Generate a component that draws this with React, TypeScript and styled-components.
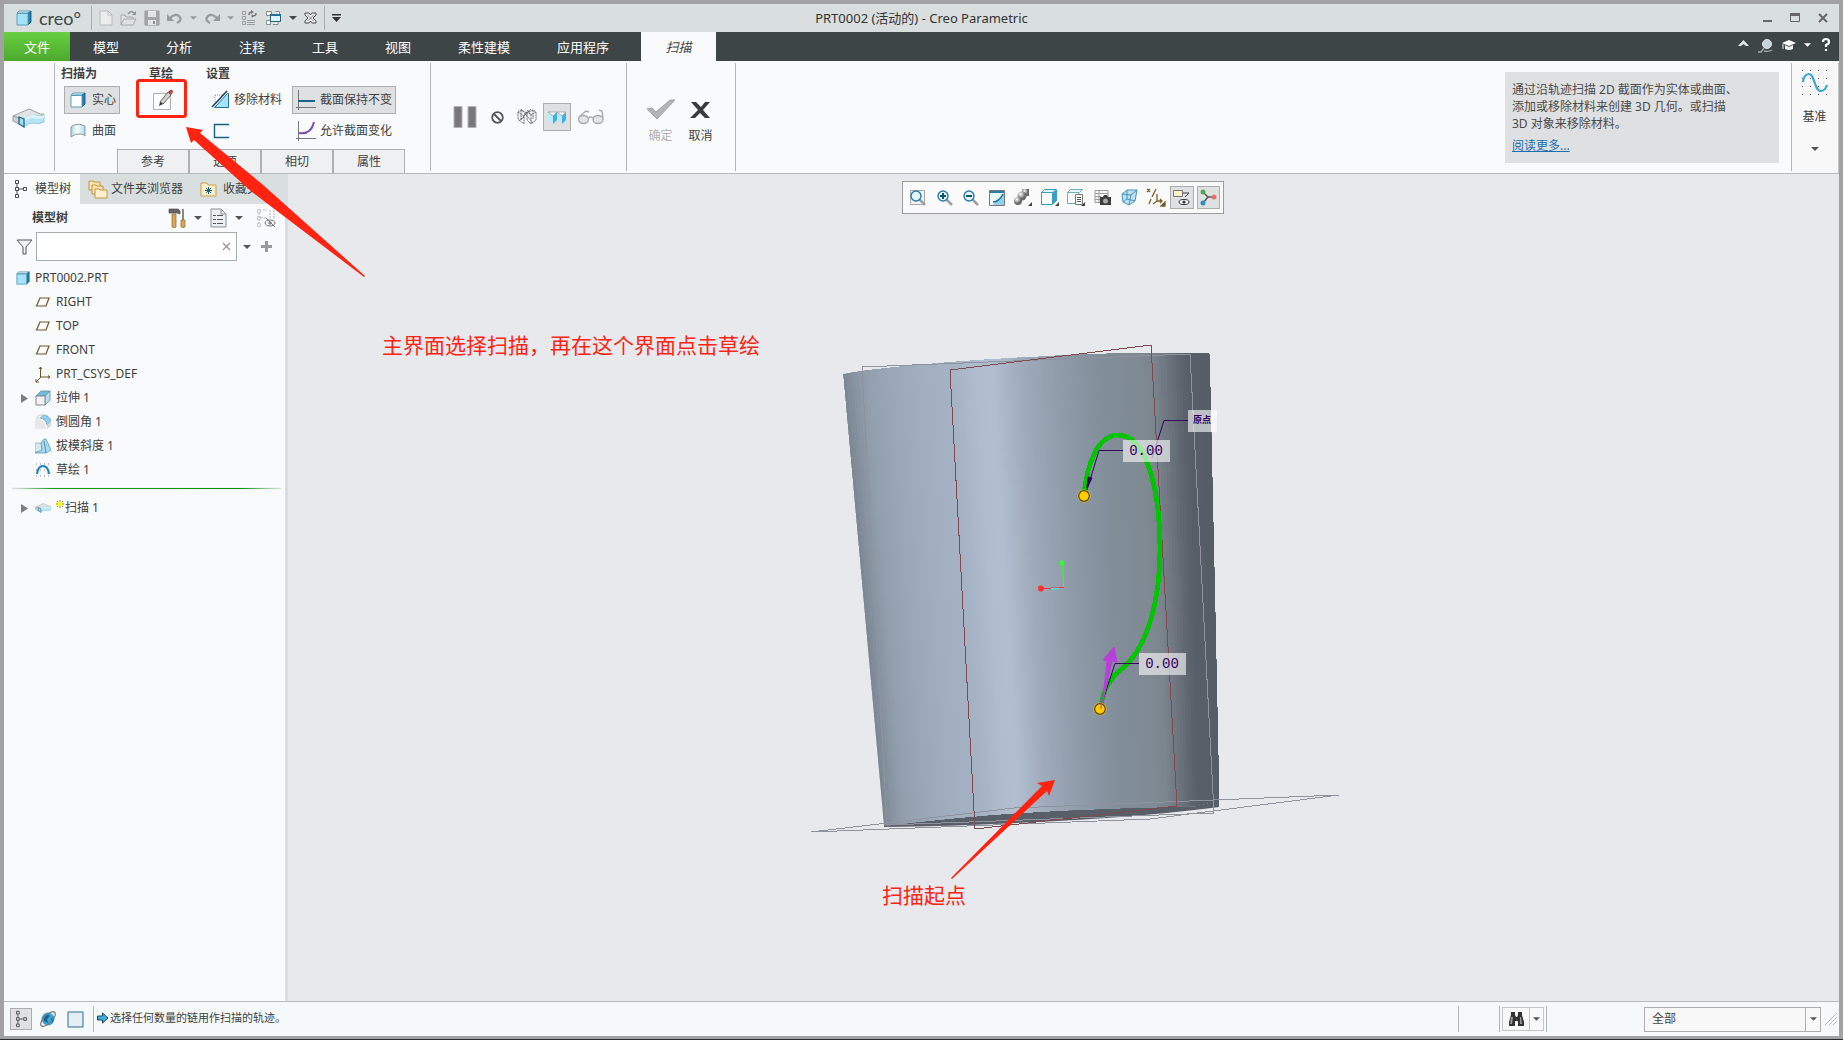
import React from "react";
import styled, { createGlobalStyle, css } from "styled-components";

const Global = createGlobalStyle`
  * { box-sizing: border-box; }
  html, body, #root { height: 100%; margin: 0; }
  body {
    font: 12px/18px "Noto Sans", "Noto Sans CJK SC", sans-serif;
    color: #3f3f3f;
    overflow: hidden;
  }
  button, input, select { font: inherit; color: inherit; }
  button { border: 0; background: none; padding: 0; }
  svg { display: block; flex: none; }
  ul { list-style: none; margin: 0; padding: 0; }
`;

/* ---------- frame ---------- */

const Window = styled.div`
  position: relative;
  display: flex;
  flex-direction: column;
  min-height: 100vh;
  background: #f8fafc;
  border: 4px solid #a2a2a2;
  &::after {
    content: "";
    position: absolute;
    left: -4px;
    right: -4px;
    bottom: -4px;
    height: 1px;
    background: #2b2b2b;
  }
`;

const TitleBar = styled.header`
  display: grid;
  grid-template-columns: 1fr auto 1fr;
  align-items: center;
  height: 28px;
  background: #d9dfde;
`;

const QuickBar = styled.div`
  display: flex;
  align-items: center;
  gap: 7px;
  padding-left: 12px;
`;

const Brand = styled.span`
  font: 18px/24px "Lato", sans-serif;
  color: #3d4446;
  width: 45px;
`;

const IconButton = styled.button`
  display: flex;
  align-items: center;
  justify-content: center;
`;

const TitleRule = styled.span`
  width: 1px;
  height: 24px;
  background: #a9afae;
`;

const Title = styled.h1`
  margin: 0;
  font-size: 13px;
  font-weight: 400;
  color: #333;
`;

const WindowButtons = styled.div`
  display: flex;
  justify-content: flex-end;
  gap: 17px;
  padding-right: 11px;
`;

/* ---------- menu ---------- */

const MenuBar = styled.nav`
  display: flex;
  align-items: stretch;
  height: 29px;
  background: #3d4547;
  font-size: 13px;
`;

const FileTab = styled.button`
  width: 66px;
  color: #fff;
  background: linear-gradient(#67cf3f, #4ea92e);
`;

const MenuItems = styled.div`
  display: flex;
  gap: 47px;
  padding: 0 32px 0 23px;
`;

const MenuItem = styled.button`
  color: #fff;
`;

const ActiveTab = styled.button`
  width: 75px;
  background: #f8fafc;
  font-style: italic;
`;

const MenuTools = styled.div`
  display: flex;
  align-items: center;
  gap: 8px;
  margin-left: auto;
  padding: 0 6px 3px 0;
`;

/* ---------- ribbon ---------- */

const Ribbon = styled.section`
  display: flex;
  height: 113px;
  padding-top: 2px;
  background: #f8fafc;
  border-bottom: 1px solid #b4bab9;
`;

const FeatureIcon = styled.div`
  display: flex;
  align-items: center;
  width: 50px;
  padding-left: 8px;
`;

const Rule = styled.span`
  flex: none;
  width: 1px;
  height: 108px;
  background: #b2b6b8;
`;

const Options = styled.div`
  display: flex;
  flex-direction: column;
  width: 375px;
`;

const OptionGroups = styled.div`
  display: flex;
  height: 86px;
`;

const Group = styled.div<{ $left: number; $width: number }>`
  padding-left: ${(p) => p.$left}px;
  width: ${(p) => p.$width}px;
`;

const GroupTitle = styled.h2`
  margin: 2px 0 3px;
  font-size: 12px;
  line-height: 18px;
  font-weight: 600;
`;

const OptionGrid = styled.div`
  display: grid;
  grid-template-columns: 86px 104px;
  row-gap: 3px;
`;

const pressed = css`
  background: #dfe0e2;
  border-color: #adadb0;
`;

const Option = styled.button<{ $on?: boolean; $gap?: number; $pad?: number }>`
  display: flex;
  align-items: center;
  gap: ${(p) => p.$gap ?? 6}px;
  height: 28px;
  padding: 0 3px 0 ${(p) => p.$pad ?? 4}px;
  white-space: nowrap;
  border: 1px solid transparent;
  ${(p) => p.$on && pressed}
`;

const Stack = styled.div`
  display: flex;
  flex-direction: column;
  gap: 3px;
  width: 56px;
  margin-left: 3px;
`;

const SketchButton = styled.button`
  display: flex;
  align-items: center;
  justify-content: center;
  width: 24px;
  height: 28px;
  margin-left: 2px;
`;

const PanelTabs = styled.div`
  display: flex;
  padding-left: 62px;
`;

const PanelTab = styled.button`
  width: 72px;
  height: 24px;
  background: #eef0f2;
  border: 1px solid #adb0b3;
  border-bottom: 0;
`;

const Preview = styled.div`
  display: flex;
  align-items: center;
  gap: 10px;
  width: 195px;
  height: 108px;
  padding-left: 22px;
`;

const SmallToggle = styled.button<{ $on?: boolean }>`
  display: flex;
  align-items: center;
  justify-content: center;
  width: 28px;
  height: 28px;
  margin: 0 -4px;
  border: 1px solid transparent;
  ${(p) => p.$on && pressed}
`;

const Confirm = styled.div`
  display: flex;
  align-items: center;
  gap: 11px;
  width: 108px;
  height: 108px;
  padding: 9px 0 0 19px;
`;

const ConfirmButton = styled.button`
  display: flex;
  flex-direction: column;
  align-items: center;
  gap: 7px;
  width: 29px;
  white-space: nowrap;
  &:disabled { color: #b0b0b0; }
`;

const Help = styled.aside`
  width: 274px;
  height: 91px;
  margin: 9px 12px 0 auto;
  padding: 9px 7px;
  background: #dfe0e2;
  line-height: 17px;
  color: #4a4a4a;
  p { margin: 0 0 5px; }
`;

const HelpLink = styled.a`
  color: #1b6fae;
`;

const Datum = styled.button`
  display: flex;
  flex-direction: column;
  align-items: center;
  width: 47px;
  height: 110px;
  padding: 6px 1px 0 0;
  background: #f8f8f8;
  border-right: 1px solid #c4c4c4;
  svg + span { margin: 11px 0 21px; }
`;

/* ---------- workspace ---------- */

const Workspace = styled.div`
  display: flex;
  flex: 1;
`;

const Side = styled.aside`
  display: flex;
  flex-direction: column;
  width: 284px;
  background: #f8fafc;
  border-right: 3px solid #d9dfde;
`;

const SideTabs = styled.div`
  display: flex;
  height: 30px;
  margin-right: -3px;
  background: #d9dfde;
`;

const SideTab = styled.button<{ $on?: boolean; $width: number; $gap: number }>`
  display: flex;
  align-items: center;
  gap: ${(p) => p.$gap}px;
  width: ${(p) => p.$width}px;
  padding-left: ${(p) => (p.$on ? 10 : 8)}px;
  white-space: nowrap;
  background: ${(p) => (p.$on ? "#f8fafc" : "none")};
`;

const TreeHead = styled.div`
  display: flex;
  align-items: center;
  height: 28px;
  gap: 8px;
  padding: 0 9px 0 28px;
  strong { font-weight: 600; margin-right: auto; }
  button:last-child { margin-left: 5px; }
`;

const Search = styled.label`
  display: flex;
  align-items: center;
  height: 29px;
  gap: 6px;
  padding-left: 12px;
`;

const SearchBox = styled.span`
  display: flex;
  align-items: center;
  width: 201px;
  height: 29px;
  margin-left: -3px;
  padding-right: 4px;
  background: #fff;
  border: 1px solid #a4b0ae;
  input {
    flex: 1;
    min-width: 0;
    height: 26px;
    border: 0;
    outline: 0;
    background: none;
  }
`;

const Tree = styled.ul`
  margin-top: 5px;
`;

const TreeRow = styled.li<{ $level: number }>`
  display: flex;
  align-items: center;
  height: 24px;
  gap: 5px;
  padding-left: ${(p) => (p.$level ? 16 : 12)}px;
`;

const TreeLabel = styled.span`
  display: flex;
  gap: 1px;
`;

const Expander = styled.span`
  width: 10px;
`;

const InsertLine = styled.li`
  height: 14px;
  margin: 0 4px 0 8px;
  padding-top: 6px;
  &::before {
    content: "";
    display: block;
    height: 1px;
    background: linear-gradient(90deg, #dbe8db, #1c9c1c 15%, #0f8f0f 85%, #dbe8db);
    box-shadow: 0 0 1px #9c9;
  }
`;

const View = styled.main`
  position: relative;
  flex: 1;
  min-height: 827px;
  background: #e8e9ed;
  overflow: hidden;
`;

const ViewTools = styled.div`
  position: relative;
  display: flex;
  align-items: center;
  gap: 3px;
  width: 322px;
  height: 33px;
  margin: 7px 0 0 614px;
  padding: 0 3px;
  background: #fafafb;
  border: 1px solid #9c9c9c;
`;

const ViewTool = styled.button<{ $on?: boolean }>`
  display: flex;
  align-items: center;
  justify-content: center;
  flex: 1;
  height: 23px;
  border: 1px solid transparent;
  ${(p) => p.$on && pressed}
`;

const Scene = styled.svg`
  position: absolute;
  left: 0;
  top: 0;
`;

const Tag = styled.span<{ $x: number; $y: number; $w: number; $small?: boolean }>`
  position: absolute;
  left: ${(p) => p.$x}px;
  top: ${(p) => p.$y}px;
  width: ${(p) => p.$w}px;
  height: 22px;
  padding-right: 1px;
  text-align: center;
  color: #35005e;
  background: rgba(255, 255, 255, 0.6);
  font: ${(p) => (p.$small ? "bold 9px" : "14px")}/22px "Liberation Mono", "Noto Sans CJK SC", monospace;
`;

const Markup = styled.svg`
  position: absolute;
  left: -4px;
  top: -4px;
  pointer-events: none;
`;

const Note = styled.p<{ $x: number; $y: number }>`
  position: absolute;
  left: ${(p) => p.$x}px;
  top: ${(p) => p.$y}px;
  margin: 0;
  font-size: 21px;
  line-height: 28px;
  color: #ff2312;
  white-space: nowrap;
`;

/* ---------- status bar ---------- */

const Status = styled.footer`
  display: flex;
  align-items: center;
  height: 35px;
  padding: 0 2px 0 6px;
  background: #f6f9fa;
  border-top: 1px solid #b4bfbd;
`;

const StatusButton = styled.button<{ $on?: boolean }>`
  display: flex;
  align-items: center;
  justify-content: center;
  width: 22px;
  height: 22px;
  margin-right: 5px;
  border: 1px solid transparent;
  ${(p) => p.$on && pressed}
`;

const StatusRule = styled.span<{ $after: number; $before?: number }>`
  width: 1px;
  height: 26px;
  margin: 0 ${(p) => p.$after}px 0 ${(p) => p.$before ?? 0}px;
  background: #b2b6b8;
`;

const Message = styled.span`
  display: flex;
  align-items: center;
  gap: 1px;
  margin-right: auto;
  padding-bottom: 2px;
  font-size: 11px;
`;

const Find = styled.div`
  display: flex;
  width: 42px;
  height: 24px;
  margin-right: 2px;
  border: 1px solid #c4c6c8;
  background: #f8f8f8;
  button + button { border-left: 1px solid #c4c6c8; width: 14px; }
  button:first-child { flex: 1; }
`;

const SelectBox = styled.div`
  display: flex;
  position: relative;
  width: 177px;
  height: 25px;
  margin-right: 4px;
  background: #f8f8f8;
  border: 1px solid #adadb0;
  select {
    flex: 1;
    appearance: none;
    border: 0;
    background: none;
    padding: 0 7px;
    outline: 0;
  }
`;

const SelectArrow = styled.span`
  display: flex;
  align-items: center;
  justify-content: center;
  width: 15px;
  border-left: 1px solid #adadb0;
  pointer-events: none;
`;

/* ---------- icons ---------- */

const Caret = ({ c = "#555", w = 8 }: { c?: string; w?: number }) => (
  <svg width={w} height="4" viewBox="0 0 8 4"><path d="M0 0h8L4 4z" fill={c} /></svg>
);

const Cube = ({ s = 16, face = "#a5e3fb" }: { s?: number; face?: string }) => (
  <svg width={s} height={s} viewBox="0 0 16 16">
    <path d="M1 3l2-2h12l-3 2z" fill="#dff5fe" stroke="#5b9cb8" />
    <path d="M12 3.500L15 1v11l-3 3z" fill="#1f7fae" stroke="#1a6a94" />
    <path d="M1 3.500h11V15H1z" fill={face} stroke="#5b9cb8" />
  </svg>
);

const NewIcon = () => (
  <svg width="14" height="16" viewBox="0 0 14 16"><path d="M1 1h8l4 4v10H1z" fill="#eceeee" stroke="#b9bcbc" /><path d="M9 1v4h4" fill="none" stroke="#b9bcbc" /></svg>
);
const OpenIcon = () => (
  <svg width="17" height="16" viewBox="0 0 17 16"><path d="M1 15V5h4l1 2h7v2M1 15l3-6h12l-3 6z" fill="#dfe1e1" stroke="#a7aaaa" /><path d="M8 4q3-4 6-1" fill="none" stroke="#8f9292" strokeWidth="1.600" /><path d="M16 1v4h-4z" fill="#8f9292" /></svg>
);
const SaveIcon = () => (
  <svg width="16" height="16" viewBox="0 0 16 16"><path d="M1 1h14v14H1z" fill="#a3a6a6" stroke="#979a9a" /><path d="M4 1h8v6H4zM4 10h8v5H4z" fill="#e4e6e6" /><path d="M9 11h2v3H9z" fill="#8b8e8e" /></svg>
);
const UndoIcon = ({ flip }: { flip?: boolean }) => (
  <svg width="16" height="14" viewBox="0 0 16 14"><g transform={flip ? "translate(16 0) scale(-1 1)" : undefined}><path d="M3 7Q8 2 12 5q4 4-2 7" fill="none" stroke="#979b9b" strokeWidth="2.400" /><path d="M0 3v7h7z" fill="#979b9b" /></g></svg>
);
const RegenIcon = () => (
  <svg width="17" height="16" viewBox="0 0 17 16" fill="none" stroke="#9a9d9d"><path d="M1.500 1.500h3v3h-3zM1.500 6.500h3v3h-3zM1.500 11.500h3v3h-3zM6 10.500h8M6 12.500h8M6 14.500h8" /><path d="M8 5q0-3 3-3M15 3q0 3-3 3" stroke="#777" strokeWidth="1.500" /><path d="M10 0l3 2-3 2zM12 4l-2 2 2 2z" fill="#777" stroke="none" /></svg>
);
const WindowsIcon = () => (
  <svg width="17" height="16" viewBox="0 0 17 16" strokeWidth="1"><path d="M1.500 1.500h5v4h-5zM10.500 1.500h4v3M1.500 10.500h4v4h-4zM8 14.500h5v-3" fill="#fff" stroke="#888" /><path d="M5.500 4.500h10v7h-10z" fill="#dff4fc" stroke="#1f5f82" /><path d="M5 4h11v2H5z" fill="#1f6f96" /></svg>
);
const CloseBoxIcon = () => (
  <svg width="13" height="12" viewBox="0 0 13 12"><path d="M1 1h4l1.500 2L8 1h4v2L9 6l3 3v2H8L6.500 9 5 11H1V9l3-3-3-3z" fill="#fff" stroke="#444" /><path d="M3 2.500l7 7M10 2.500l-7 7" stroke="#777" /></svg>
);
const MoreIcon = () => (
  <svg width="9" height="8" viewBox="0 0 9 8"><path d="M0 0h9v1.500H0zM0 3h9L4.500 8z" fill="#333" /></svg>
);
const SweepIcon = ({ w = 33 }: { w?: number }) => (
  <svg width={w} height={Math.round((w * 20) / 33)} viewBox="0 0 33 20">
    <path d="M1 8L17 1l9 4q3 2 6 1l-2 3-18 3z" fill="#e2e4e5" stroke="#9b9ea0" />
    <path d="M12 11q6-5 11-4 5 2 9 0v7q-6 3-11 1-4 0-9 4z" fill="#b6e3f6" stroke="#7fb9d0" strokeWidth=".7" />
    <path d="M12 11q6-5 11-4 5 2 9 0v3q-6 2-11 0-4 0-9 4z" fill="#d9f2fb" />
    <path d="M1 8l6 2v6l-6-3z" fill="#cfd2d4" stroke="#9b9ea0" />
    <path d="M7 9l5 2v8l-5-3z" fill="#a9dcf1" stroke="#246a8a" strokeWidth="1.300" />
  </svg>
);
const SurfaceIcon = () => (
  <svg width="16" height="16" viewBox="0 0 16 16"><defs><linearGradient id="surf"><stop offset="0" stopColor="#9bd4ec" /><stop offset=".4" stopColor="#fff" /><stop offset="1" stopColor="#a9dcf2" /></linearGradient></defs><path d="M1 4l3-2q6-2 11 1v10q-2-2-4-2-6-1-10 3z" fill="url(#surf)" stroke="#8a979d" /></svg>
);
const SketchIcon = () => (
  <svg width="22" height="22" viewBox="0 0 22 22"><path d="M1.500 4.500h17v16h-17z" fill="#fff" stroke="#aeb0b2" /><path d="M8 13l8-10 3 3-8 9z" fill="#d2d2cf" stroke="#66645f" /><path d="M7 17l1-4 3 2z" fill="#333" /><path d="M16 3l2-2q3-1 3 2l-2 3z" fill="#a94c42" /></svg>
);
const RemoveIcon = () => (
  <svg width="19" height="20" viewBox="0 0 19 20"><path d="M4 5h10M4 5v9" stroke="#999" strokeDasharray="1 1" fill="none" /><path d="M3.500 17.500h14v-14h-1z" fill="#a5e3fb" stroke="#1f6f96" /><path d="M1 17L16 1" stroke="#123f57" strokeWidth="1.500" /></svg>
);
const ThinIcon = () => (
  <svg width="19" height="16" viewBox="0 0 19 16"><path d="M18 1.500H3.500v13H18" fill="none" stroke="#1c5f84" strokeWidth="1.400" /></svg>
);
const ConstIcon = () => (
  <svg width="20" height="20" viewBox="0 0 20 20"><path d="M2.500 0v20M0 17.500h20" stroke="#777" /><path d="M2 11h17" stroke="#17638c" strokeWidth="2" /></svg>
);
const VarIcon = () => (
  <svg width="20" height="20" viewBox="0 0 20 20"><path d="M2.500 0v20M0 17.500h20" stroke="#777" /><path d="M3 12q12 2 15-11" fill="none" stroke="#7b4fae" strokeWidth="2" /></svg>
);
const PauseIcon = () => (
  <svg width="24" height="22" viewBox="0 0 24 22"><path d="M1 .5h8v21H1zM15 .5h8v21h-8z" fill="#7b787b" stroke="#b5b3b5" /></svg>
);
const NoneIcon = () => (
  <svg width="13" height="13" viewBox="0 0 13 13" fill="none" stroke="#555" strokeWidth="1.800"><circle cx="6.500" cy="6.500" r="5.300" /><path d="M3 3l7 7" /></svg>
);
const WireIcon = () => (
  <svg width="20" height="18" viewBox="0 0 20 18" fill="none" stroke="#666" strokeWidth=".9" strokeDasharray="2 .5"><path d="M1 4l3-2 6 3 6-3 3 2v8l-5 4V7l-4-3-3 4v8l-6-5zM1 4l6 4 4-6 3 5 5-3M4 2v10l3-3M10 5v7l4 4M16 2v9M4 1l12 14M2 13L14 1" /></svg>
);
const ShadeIcon = () => (
  <svg width="20" height="15" viewBox="0 0 20 15"><path d="M1 2l5 4v8l-5-4zM10 3l5 3v8l-5-5z" fill="#b9ecfc" /><path d="M6 6l4-4v8l-4 4zM15 6l4-4v8l-4 4z" fill="#3fb2e0" /><path d="M1 2h18l-4 4-5-4-4 4z" fill="#fff" stroke="#999" strokeWidth=".8" /></svg>
);
const GlassesIcon = () => (
  <svg width="28" height="16" viewBox="0 0 28 16" fill="#e4e4e4" stroke="#aaa" strokeWidth="1.400"><ellipse cx="6.500" cy="10.500" rx="5" ry="4" /><ellipse cx="21" cy="10.500" rx="5" ry="4" /><path d="M11 9q3-2 5 0M2 8l7-6 3 1M26 9l-1-7-3-1" fill="none" /></svg>
);
const CheckIcon = () => (
  <svg width="29" height="21" viewBox="0 0 29 21"><path d="M1 10l5-1 4 4L24 1h5L11 20z" fill="#b4b4b4" stroke="#a2a2a2" /></svg>
);
const CancelIcon = () => (
  <svg width="21" height="21" viewBox="0 0 21 21"><path d="M1 3h5l5 5 4-5h5l-7 8 7 8h-5l-5-5-5 5H0l8-8z" fill="#3b3b3b" /></svg>
);
const DatumIcon = () => (
  <svg width="28" height="28" viewBox="0 0 28 28"><g fill="#555">{[1, 9, 17, 25].map((x) => [1, 9, 17, 25].map((y) => <rect key={`${x}-${y}`} x={x} y={y} width="1" height="1" />))}</g><path d="M2 13C2 8 5 5 8 5 14 5 13 22 20 22 23 22 25 19 26 16" fill="none" stroke="#3ba4d6" strokeWidth="2.200" /></svg>
);
const UpIcon = () => <svg width="11" height="12" viewBox="0 0 11 12"><path d="M0 7l5.500-6L11 7H8L5.500 5 3 7z" fill="#e4e6e6" /></svg>;
const FindIcon = () => <svg width="16" height="16" viewBox="0 0 16 16"><circle cx="10" cy="7" r="4.500" fill="#c3d3db" stroke="#e8e8e8" /><path d="M7 11l-3 4H1M7 14q5 1 8-1" stroke="#aaa" fill="none" strokeWidth="1.400" /></svg>;
const CapIcon = () => <svg width="15" height="14" viewBox="0 0 15 14"><path d="M1 5l7-3 7 3-7 3z" fill="#fff" /><path d="M4 7v4q4 2 8 0V7L8 9z" fill="#eee" /><path d="M2 6v5" stroke="#eee" /></svg>;

const TreeIcon = ({ w = 14, h = 20 }: { w?: number; h?: number }) => (
  <svg width={w} height={h} viewBox="0 0 14 20" fill="none" stroke="#4a4a4a"><path d="M1.500 1.500h3v3h-3zM1.500 8.500h3v3h-3zM1.500 15.500h3v3h-3zM9.500 8.500h3v3h-3zM3 5v3M3 12v3M5 10h4" /></svg>
);
const FoldersIcon = () => (
  <svg width="20" height="20" viewBox="0 0 20 20" fill="#fbe3ae" stroke="#b98d3f" strokeWidth=".9"><path d="M1 2h4l1 1h6v8H1z" /><path d="M4 6h4l1 1h6v8H4z" /><path d="M7 10h4l1 1h7v8H7z" fill="#fdf0cf" /></svg>
);
const FavIcon = () => (
  <svg width="17" height="16" viewBox="0 0 17 16"><path d="M1 2h6l1 2h8v11H1z" fill="#fdeec8" stroke="#c59d54" /><path d="M8.500 6v7M5 9.500h7M6 7l5 5M11 7l-5 5" stroke="#1c5f84" /></svg>
);
const ToolsIcon = () => (
  <svg width="18" height="21" viewBox="0 0 18 21"><path d="M1 1h9l2 2v3l-3-1H1z" fill="#666" stroke="#444" strokeWidth=".6" /><path d="M4 6h4v13q-2 1-4 0z" fill="#dba55a" stroke="#8f6a32" strokeWidth=".7" /><path d="M14 1h2v11h-2z" fill="#888" /><path d="M13 12h4v7q-2 1-4 0z" fill="#dba55a" stroke="#8f6a32" strokeWidth=".7" /></svg>
);
const ListIcon = () => (
  <svg width="17" height="20" viewBox="0 0 17 20"><path d="M1 1h10l5 5v13H1z" fill="#eaf0f3" stroke="#8b9194" /><path d="M11 1v5h5" fill="none" stroke="#8b9194" /><g stroke="#555"><path d="M3 7.500h3M3 11.500h3M3 15.500h3M7 7.500h6M7 11.500h6M7 15.500h6" /></g></svg>
);
const HideIcon = () => (
  <svg width="20" height="20" viewBox="0 0 20 20" fill="none" stroke="#b5b7b9"><path d="M1.500 1.500h3v3h-3zM1.500 8.500h3v3h-3zM1.500 15.500h3v3h-3zM3 5v10M5 10h5M7 2h4M14 2v8M18 2v8" strokeDasharray="2 1" /><ellipse cx="14" cy="15" rx="5" ry="3" stroke="#777" /><circle cx="14" cy="15" r="1.500" fill="#777" /><path d="M10 10l9 9" stroke="#777" /></svg>
);
const FilterIcon = () => (
  <svg width="17" height="16" viewBox="0 0 17 16"><path d="M1 1h15l-6 7v7H7V8z" fill="#f1f1f1" stroke="#555" /></svg>
);
const Plane = () => <svg width="16" height="16" viewBox="0 0 16 16"><path d="M5 4h9l-3 8H1.500z" fill="none" stroke="#6d5527" strokeWidth="1.200" /></svg>;
const Csys = () => <svg width="16" height="17" viewBox="0 0 16 17"><path d="M5.500 1v10H15M6 11l-5 5M4 3l1.500-2L7 3M13 9.500l2 1.500-2 1.500M1 13v3h3" fill="none" stroke="#6d5527" /></svg>;
const Extrude = () => <svg width="16" height="16" viewBox="0 0 16 16"><path d="M1 6l5-5h9l-5 5z" fill="#6fbde0" stroke="#6d8b98" strokeWidth=".8" /><path d="M10 6l5-5v9l-5 5z" fill="#b5e0f2" stroke="#6d8b98" strokeWidth=".8" /><path d="M1 6h9v9H1z" fill="#f1f1f1" stroke="#85898b" /></svg>;
const Round = () => <svg width="16" height="16" viewBox="0 0 16 16"><path d="M0 5h5q5 1 6 10H0z" fill="#e8e8e8" /><path d="M5 4l3-3q6 0 8 6l-4 4Q11 5 5 4z" fill="#8fd0ec" stroke="#5d9db8" strokeWidth=".7" /><path d="M1 4l3-3h4L5 4z" fill="#f6f6f6" stroke="#bbb" strokeWidth=".6" /><path d="M12 11l4-4v5l-4 3z" fill="#d8d8d8" /></svg>;
const Draft = () => <svg width="16" height="16" viewBox="0 0 16 16"><path d="M0 5h7v9H0z" fill="#d5e9f2" stroke="#8fa9b3" strokeWidth=".7" /><path d="M6 5l3-4h2l5 11-5 3H0l7-3z" fill="#a9d9ee" stroke="#5b9ab5" strokeWidth=".8" /><path d="M9 3l2 12" stroke="#3d7f9c" strokeWidth=".8" /></svg>;
const SketchTree = () => <svg width="16" height="16" viewBox="0 0 16 16"><path d="M1 2h14M1 8h14M1 14h14" stroke="#888" strokeDasharray="1 3" /><path d="M2 12q1-8 6-8 5 0 6 8" fill="none" stroke="#2483b4" strokeWidth="2.200" /></svg>;
const Star = () => <svg width="8" height="10" viewBox="0 0 8 10"><path d="M4 1v8M0 5h8M1 2l6 6M7 2L1 8" stroke="#8a8a00" /><path d="M2 3h4v4H2z" fill="#ff0" /></svg>;

const Glass = ({ mode }: { mode: "fit" | "in" | "out" }) => (
  <svg width="17" height="17" viewBox="0 0 17 17">
    {mode === "fit" && <path d="M1.500 1.500h14v14h-14z" fill="#f4f4f4" stroke="#aaa" />}
    <path d="M10 10l6 6" stroke="#9ba1a4" strokeWidth="2.500" />
    <circle cx="7" cy="7" r="5" fill="#e2f5fd" stroke="#2b7ba3" strokeWidth="1.400" />
    {mode !== "fit" && <path d={mode === "in" ? "M4 7h6M7 4v6" : "M4 7h6"} stroke="#12536f" strokeWidth="2" />}
  </svg>
);
const Corner = () => <path d="M19 14v4h-4z" fill="#444" />;
const Repaint = () => <svg width="16" height="16" viewBox="0 0 16 16"><path d="M.5.5h15v15H.5z" fill="#e9f6fb" stroke="#777" /><path d="M1 1h14v2H1z" fill="#2b7ba3" /><path d="M15 3v12H4l2-3q5-3 9-9z" fill="#8fd0ec" /><path d="M4 12q6 0 10-8" fill="none" stroke="#1c6f9b" strokeWidth="1.500" /></svg>;
const Spheres = () => <svg width="20" height="19" viewBox="0 0 20 19"><defs><radialGradient id="ball" cx=".35" cy=".3"><stop offset="0" stopColor="#fff" /><stop offset="1" stopColor="#6a6a6a" /></radialGradient></defs><path d="M9 1h7v7H9z" fill="url(#ball)" /><circle cx="9" cy="8" r="4.500" fill="url(#ball)" /><circle cx="5" cy="13" r="4" fill="url(#ball)" /><Corner /></svg>;
const BoxView = () => <svg width="20" height="19" viewBox="0 0 20 19"><path d="M1.500 4.500l3-3h12l-4 3z" fill="#dff4fd" stroke="#3b9cc4" /><path d="M13 4.500l4-3v11l-4 4z" fill="#3b9cc4" /><path d="M1.500 4.500h11v12h-11z" fill="#fff" stroke="#3b9cc4" /><Corner /></svg>;
const SavedView = () => <svg width="20" height="19" viewBox="0 0 20 19"><path d="M1.500 4.500l3-3h12l-3 3z" fill="#e9f8fe" stroke="#6faec7" /><path d="M1.500 4.500h11v11h-11z" fill="#fff" stroke="#6faec7" /><path d="M9.500 6.500h7v10h-7z" fill="#fff" stroke="#777" /><path d="M11 9.500h4M11 11.500h4M11 13.500h4" stroke="#555" /><Corner /></svg>;
const Camera = () => <svg width="17" height="18" viewBox="0 0 17 18"><path d="M1 1.500h13v12H1zM1 4.500h13M1 7.500h6M1 10.500h6M5 2v12" fill="#fafafa" stroke="#999" /><path d="M6 8h3l1-2h3l1 2h3v8H6z" fill="#3d3d3d" /><circle cx="11.500" cy="12" r="2.500" fill="#aaa" /></svg>;
const Persp = () => <svg width="17" height="17" viewBox="0 0 17 17"><path d="M1 5l5-4h10l-2 11-6 4-6-3z" fill="#b8e3f4" stroke="#4b94b3" /><path d="M6 1v9l8 2M6 10l-4 3M1 5l9 1 6-5M10 6l-2 10" fill="none" stroke="#4b94b3" /></svg>;
const DatumView = () => <svg width="20" height="19" viewBox="0 0 20 19" fill="none" stroke="#7a5c26" strokeWidth="1.300"><path d="M1 1l3 3M4 1L1 4M10 1L6 9M5 11l-2 5M11 6v7h5M11 13l-4 3M14 11l2 2-2 2" /><Corner /></svg>;
const NoteView = () => <svg width="17" height="17" viewBox="0 0 17 17"><path d="M.5 1.500h9v6h-9z" fill="#fdf3c6" stroke="#777" /><path d="M10 4h6l-4 4" fill="none" stroke="#444" /><ellipse cx="11" cy="13" rx="5" ry="2.500" fill="#fff" stroke="#333" /><circle cx="11" cy="13" r="1.600" fill="#333" /></svg>;
const SpinView = () => <svg width="17" height="17" viewBox="0 0 17 17"><path d="M3 3l5 5h6M8 8l-5 6" fill="none" stroke="#555" strokeWidth="1.400" /><circle cx="3" cy="3" r="2.500" fill="#55a557" /><circle cx="14" cy="8" r="2.500" fill="#e8706c" /><circle cx="3" cy="14" r="2.500" fill="#2f8fc0" /></svg>;
const Globe = () => <svg width="18" height="18" viewBox="0 0 18 18"><circle cx="9" cy="9" r="6.500" fill="#3da5d9" /><path d="M5 6q4-3 6 0l-3 3 1 4-4-2zM12 8l3 1-2 4z" fill="#126590" /><ellipse cx="9" cy="9" rx="9.500" ry="4" transform="rotate(-45 9 9)" fill="none" stroke="#777" strokeWidth="1.200" /></svg>;
const Sheet = () => <svg width="17" height="17" viewBox="0 0 17 17"><path d="M1 1h15v15H1z" fill="#e5eef3" stroke="#2b6c8d" /></svg>;
const Arrow = () => <svg width="12" height="12" viewBox="0 0 12 12"><path d="M.5 4h5V1L11 6l-5.500 5V8h-5z" fill="#45aede" stroke="#14445c" /></svg>;
const Binoculars = () => <svg width="17" height="16" viewBox="0 0 17 16"><path d="M3 1h4v3l1 2h1l1-2V1h4v3l2 7v4h-6v-5H7v5H1v-4l2-7z" fill="#333" /><path d="M3 6l-1 7h2l1-7zM12 6v7h2l-1-7z" fill="#999" /></svg>;
const Grip = () => <svg width="12" height="12" viewBox="0 0 12 12" stroke="#b4b8ba"><path d="M0 12L12 0M4 12l8-8M8 12l4-4" /></svg>;

/* ---------- model drawing ---------- */

const SHADES: [number, string][] = [
  [0, "7c8894"], [0.025, "8793a0"], [0.06, "929fad"], [0.114, "98a6b6"], [0.205, "a0aebf"],
  [0.296, "a6b3c4"], [0.36, "b0bdcf"], [0.405, "b1becf"], [0.478, "a0acbc"], [0.57, "929eac"],
  [0.66, "8793a0"], [0.706, "818d98"], [0.797, "7f8a93"], [0.842, "7b858e"], [0.88, "6d757f"],
  [0.915, "5e656f"], [0.943, "575e67"], [1, "565d66"],
];

const shadeAt = (t: number) => {
  let i = 1;
  while (i < SHADES.length - 1 && SHADES[i][0] < t) i++;
  const [t0, a] = SHADES[i - 1];
  const [t1, b] = SHADES[i];
  const k = Math.min(1, (t - t0) / (t1 - t0));
  const ch = (s: string, n: number) => parseInt(s.slice(n * 2, n * 2 + 2), 16);
  return `rgb(${[0, 1, 2].map((n) => Math.round(ch(a, n) + (ch(b, n) - ch(a, n)) * k)).join(",")})`;
};

const STRIPS = 120;

const Model = () => (
  <Scene width="1551" height="828" viewBox="288 174 1551 828" aria-hidden="true">
    <defs>
      <clipPath id="body">
        <path d="M843 374Q900 365 1000 359T1160 353H1209L1210 385L1215 610L1219 800L1196 806L1121 808Q1000 811 884 826Z" />
      </clipPath>
    </defs>
    <path d="M884 825Q970 813 1050 811L1196 805L1219 798V807Q1150 816 1057 821T884 827Z" fill="#585f69" />
    <g clipPath="url(#body)" shapeRendering="crispEdges">
      {Array.from({ length: STRIPS }, (_, i) => {
        const t = i / STRIPS;
        return <path key={i} d={`M${840 + 369 * t} 340L${884 + 335 * t} 830H1240V340Z`} fill={shadeAt(t)} />;
      })}
    </g>
    <g fill="none" strokeWidth="1" shapeRendering="crispEdges">
      <path d="M862 367L1190 354L1214 813L887 825Z" stroke="#8f939e" />
      <path d="M811 832L1014 808L1339 795L1150 819Z" stroke="#8f939e" />
      <path d="M950 370L1151 345L1177 806L975 829Z" stroke="#7d4a50" />
    </g>
    <path d="M1084 494C1087 466 1097 435 1118 435C1145 435 1160 485 1160 550C1160 600 1148 645 1124 667C1108 680 1104 690 1101 705" fill="none" stroke="#00c400" strokeWidth="4.800" shapeRendering="crispEdges" />
    <g fill="none" stroke="#35005e">
      <path d="M1123 450.500H1099L1087 490M1188 420.500H1164L1152 458M1139 663.500H1115L1102 703" />
      <path d="M1088 477l4 1-5 10z" fill="#35005e" />
    </g>
    <path d="M1114 647L1117 662L1112 661L1102 706L1107 661L1103 660Z" fill="#b83fd8" stroke="#b83fd8" />
    {[[1084, 496], [1100, 709]].map(([x, y]) => (
      <g key={y}>
        <circle cx={x} cy={y} r="6.500" fill="#ffc800" />
        <circle cx={x} cy={y} r="5.300" fill="#ffcc00" stroke="#4a4410" strokeWidth="1.200" />
      </g>
    ))}
    <path d="M1101 703v6" stroke="#b83fd8" />
    <path d="M1041 588.500h10M1051 587.500h13" stroke="#ff3030" />
    <path d="M1062.500 564l1 23" stroke="#30ff30" />
    <path d="M1051 588.500h8" stroke="#30f0ff" strokeWidth="1.500" />
    <circle cx="1041" cy="588.500" r="3" fill="#ff3030" />
    <circle cx="1062" cy="563" r="2.500" fill="#30ff30" />
  </Scene>
);

/* ---------- data ---------- */

const MENUS = ["模型", "分析", "注释", "工具", "视图", "柔性建模", "应用程序"];
const PANEL_TABS = ["参考", "选项", "相切", "属性"];

type Node = { label: string; icon: React.ReactNode; level: number; open?: boolean; fresh?: boolean };
const NODES: Node[] = [
  { label: "PRT0002.PRT", icon: <Cube s={14} />, level: 0 },
  { label: "RIGHT", icon: <Plane />, level: 1 },
  { label: "TOP", icon: <Plane />, level: 1 },
  { label: "FRONT", icon: <Plane />, level: 1 },
  { label: "PRT_CSYS_DEF", icon: <Csys />, level: 1 },
  { label: "拉伸 1", icon: <Extrude />, level: 1, open: true },
  { label: "倒圆角 1", icon: <Round />, level: 1 },
  { label: "拔模斜度 1", icon: <Draft />, level: 1 },
  { label: "草绘 1", icon: <SketchTree />, level: 1 },
];

const VIEW_TOOLS: [string, React.ReactNode, boolean?][] = [
  ["重新调整", <Glass mode="fit" />], ["放大", <Glass mode="in" />], ["缩小", <Glass mode="out" />],
  ["重画", <Repaint />], ["渲染选项", <Spheres />], ["显示样式", <BoxView />], ["已保存方向", <SavedView />],
  ["视图管理器", <Camera />], ["透视图", <Persp />], ["基准显示", <DatumView />],
  ["注释显示", <NoteView />, true], ["旋转中心", <SpinView />, true],
];

const Row = ({ node }: { node: Node }) => (
  <TreeRow $level={node.level}>
    {node.level > 0 && (
      <Expander>{node.open && <svg width="8" height="9" viewBox="0 0 8 9"><path d="M1 0l7 4.500L1 9z" fill="#7d7d7d" /></svg>}</Expander>
    )}
    {node.icon}
    <TreeLabel>{node.fresh && <Star />}{node.label}</TreeLabel>
  </TreeRow>
);

export default function App() {
  return (
    <Window>
      <Global />
      <TitleBar>
        <QuickBar>
          <Cube s={16} />
          <Brand>creo°</Brand>
          <TitleRule />
          <IconButton aria-label="新建"><NewIcon /></IconButton>
          <IconButton aria-label="打开"><OpenIcon /></IconButton>
          <IconButton aria-label="保存"><SaveIcon /></IconButton>
          <IconButton aria-label="撤销"><UndoIcon /></IconButton>
          <IconButton aria-label="撤销列表"><Caret c="#999" w={7} /></IconButton>
          <IconButton aria-label="重做"><UndoIcon flip /></IconButton>
          <IconButton aria-label="重做列表"><Caret c="#999" w={7} /></IconButton>
          <IconButton aria-label="重新生成"><RegenIcon /></IconButton>
          <IconButton aria-label="窗口"><WindowsIcon /></IconButton>
          <IconButton aria-label="窗口列表"><Caret c="#444" /></IconButton>
          <IconButton aria-label="关闭文件"><CloseBoxIcon /></IconButton>
          <TitleRule />
          <IconButton aria-label="自定义"><MoreIcon /></IconButton>
        </QuickBar>
        <Title>PRT0002 (活动的) - Creo Parametric</Title>
        <WindowButtons>
          <IconButton aria-label="最小化"><svg width="10" height="10"><path d="M0 7h9v2H0z" fill="#666" /></svg></IconButton>
          <IconButton aria-label="最大化"><svg width="11" height="10"><path d="M.5.5h9v8h-9z" fill="none" stroke="#666" /><path d="M0 0h10v3H0z" fill="#666" /></svg></IconButton>
          <IconButton aria-label="关闭"><svg width="10" height="10"><path d="M1 1l8 8M9 1L1 9" stroke="#666" strokeWidth="2" /></svg></IconButton>
        </WindowButtons>
      </TitleBar>

      <MenuBar>
        <FileTab>文件</FileTab>
        <MenuItems>{MENUS.map((m) => <MenuItem key={m}>{m}</MenuItem>)}</MenuItems>
        <ActiveTab>扫描</ActiveTab>
        <MenuTools>
          <IconButton aria-label="最小化功能区"><UpIcon /></IconButton>
          <IconButton aria-label="搜索"><FindIcon /></IconButton>
          <IconButton aria-label="学习"><CapIcon /></IconButton>
          <IconButton aria-label="学习列表"><Caret c="#fff" w={7} /></IconButton>
          <IconButton aria-label="帮助"><svg width="14" height="16" viewBox="0 0 14 16"><path d="M4 5q0-3 3-3t3 3q0 2-3 3v2M7 12v2" fill="none" stroke="#fff" strokeWidth="2.200" /></svg></IconButton>
        </MenuTools>
      </MenuBar>

      <Ribbon>
        <FeatureIcon><SweepIcon /></FeatureIcon>
        <Rule />
        <Options>
          <OptionGroups>
            <Group $left={6} $width={84}>
              <GroupTitle>扫描为</GroupTitle>
              <Stack>
                <Option $on $pad={5}><Cube s={16} face="#fff" />实心</Option>
                <Option $pad={5}><SurfaceIcon />曲面</Option>
              </Stack>
            </Group>
            <Group $left={10} $width={60}>
              <GroupTitle>草绘</GroupTitle>
              <SketchButton aria-label="草绘"><SketchIcon /></SketchButton>
            </Group>
            <Group $left={7} $width={200}>
              <GroupTitle>设置</GroupTitle>
              <OptionGrid>
                <Option $pad={4} $gap={4}><RemoveIcon />移除材料</Option>
                <Option $on $pad={3} $gap={4}><ConstIcon />截面保持不变</Option>
                <Option $pad={4} aria-label="薄板"><ThinIcon /></Option>
                <Option $pad={3} $gap={4}><VarIcon />允许截面变化</Option>
              </OptionGrid>
            </Group>
          </OptionGroups>
          <PanelTabs>{PANEL_TABS.map((t) => <PanelTab key={t}>{t}</PanelTab>)}</PanelTabs>
        </Options>
        <Rule />
        <Preview>
          <IconButton aria-label="暂停"><PauseIcon /></IconButton>
          <SmallToggle aria-label="无预览"><NoneIcon /></SmallToggle>
          <SmallToggle aria-label="分离预览"><WireIcon /></SmallToggle>
          <SmallToggle $on aria-label="连接预览"><ShadeIcon /></SmallToggle>
          <IconButton aria-label="验证"><GlassesIcon /></IconButton>
        </Preview>
        <Rule />
        <Confirm>
          <ConfirmButton disabled><CheckIcon />确定</ConfirmButton>
          <ConfirmButton><CancelIcon />取消</ConfirmButton>
        </Confirm>
        <Rule />
        <Help>
          <p>通过沿轨迹扫描 2D 截面作为实体或曲面、<br />添加或移除材料来创建 3D 几何。或扫描<br />3D 对象来移除材料。</p>
          <HelpLink href="#more">阅读更多...</HelpLink>
        </Help>
        <Rule />
        <Datum><DatumIcon /><span>基准</span><Caret /></Datum>
      </Ribbon>

      <Workspace>
        <Side>
          <SideTabs>
            <SideTab $on $width={76} $gap={7}><TreeIcon />模型树</SideTab>
            <SideTab $width={112} $gap={3}><FoldersIcon />文件夹浏览器</SideTab>
            <SideTab $width={90} $gap={6}><FavIcon />收藏夹</SideTab>
          </SideTabs>
          <TreeHead>
            <strong>模型树</strong>
            <IconButton aria-label="设置"><ToolsIcon /></IconButton>
            <Caret />
            <IconButton aria-label="显示"><ListIcon /></IconButton>
            <Caret />
            <IconButton aria-label="隐藏"><HideIcon /></IconButton>
          </TreeHead>
          <Search>
            <FilterIcon />
            <SearchBox>
              <input type="text" aria-label="过滤模型树" />
              <svg width="10" height="10"><path d="M1 1l7 7M8 1L1 8" stroke="#999" strokeWidth="1.400" /></svg>
            </SearchBox>
            <Caret />
            <svg width="19" height="12" viewBox="-4 0 19 12"><path d="M4 0h3v4h4v3H7v4H4V7H0V4h4z" fill="#999" /></svg>
          </Search>
          <Tree>
            {NODES.map((n) => <Row key={n.label} node={n} />)}
            <InsertLine />
            <Row node={{ label: "扫描 1", icon: <SweepIcon w={16} />, level: 1, open: true, fresh: true }} />
          </Tree>
        </Side>
        <View>
          <Model />
          <ViewTools>
            {VIEW_TOOLS.map(([label, icon, on]) => <ViewTool key={label} $on={on} aria-label={label}>{icon}</ViewTool>)}
          </ViewTools>
          <Tag $x={900} $y={236} $w={29} $small>原点</Tag>
          <Tag $x={835} $y={266} $w={47}>0.00</Tag>
          <Tag $x={851} $y={479} $w={47}>0.00</Tag>
          <Note $x={94} $y={157}>主界面选择扫描，再在这个界面点击草绘</Note>
          <Note $x={594} $y={707}>扫描起点</Note>
        </View>
      </Workspace>

      <Status>
        <StatusButton $on aria-label="导航器"><TreeIcon w={13} h={18} /></StatusButton>
        <StatusButton aria-label="浏览器"><Globe /></StatusButton>
        <StatusButton aria-label="全屏"><Sheet /></StatusButton>
        <StatusRule $before={2} $after={3} />
        <Message><Arrow />选择任何数量的链用作扫描的轨迹。</Message>
        <StatusRule $after={40} />
        <StatusRule $after={2} />
        <Find>
          <IconButton aria-label="查找"><Binoculars /></IconButton>
          <IconButton aria-label="查找选项"><Caret w={7} /></IconButton>
        </Find>
        <StatusRule $after={97} />
        <SelectBox>
          <select aria-label="选择过滤器" defaultValue="全部"><option>全部</option></select>
          <SelectArrow><Caret w={7} /></SelectArrow>
        </SelectBox>
        <Grip />
      </Status>

      <Markup width="1240" height="900" viewBox="0 0 1240 900" aria-hidden="true">
        <rect x="137.500" y="80.500" width="48" height="36" rx="2" fill="none" stroke="#ff2312" strokeWidth="3" />
        <path d="M186 127L203 130L200 133L262 184L365 276L364 277L252 192L194 140L191 143Z" fill="#ff2312" />
        <path d="M1055 780L1049 796L1047 791L952 879L951 878L1042 786L1037 783Z" fill="#ff2312" />
      </Markup>
    </Window>
  );
}
